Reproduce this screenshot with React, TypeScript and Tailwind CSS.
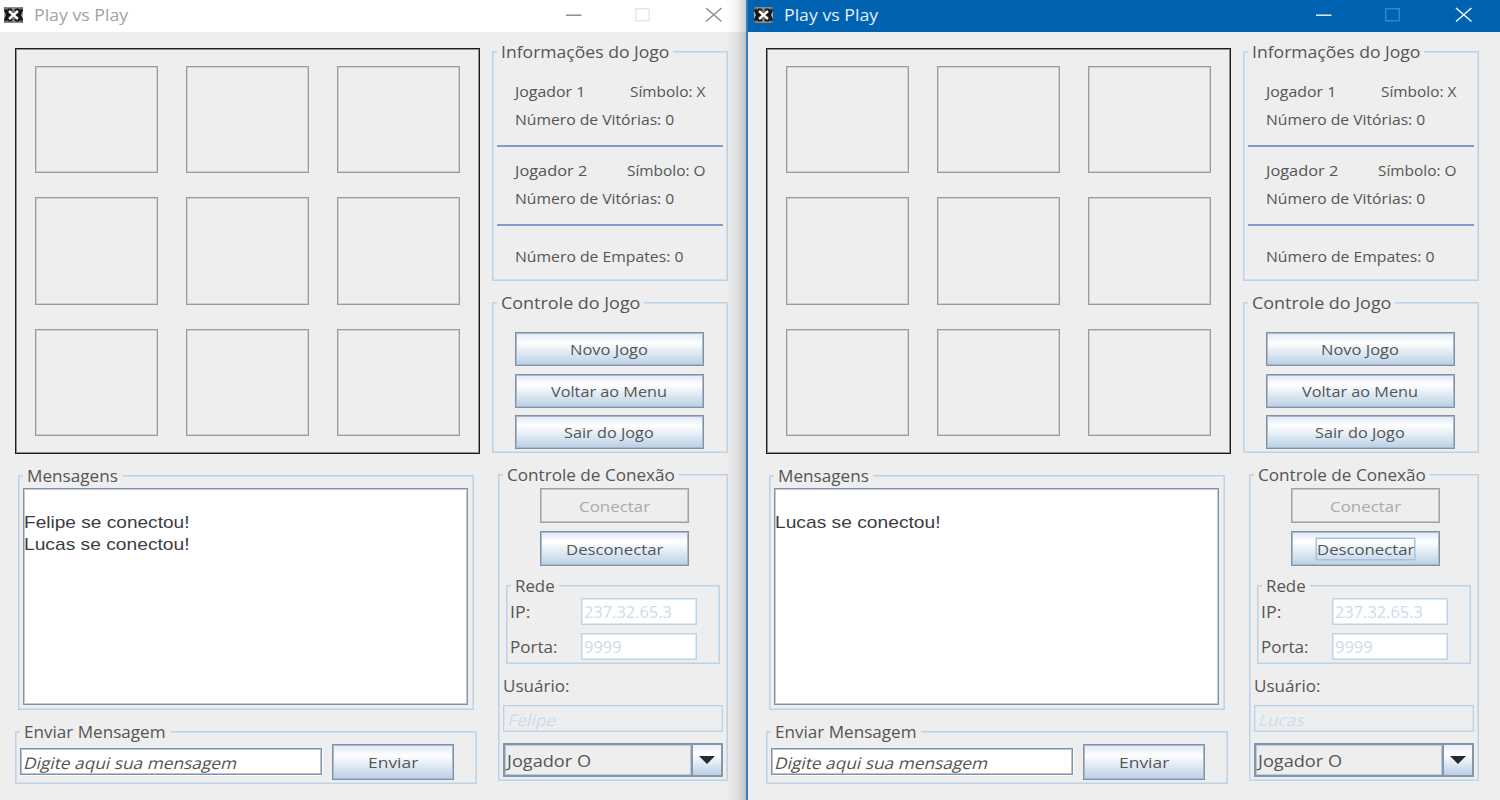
import { useLayoutEffect, useRef, useState, type ReactNode } from 'react';
import clsx from 'clsx';

/** Text stretched horizontally so that it fills exactly `width` pixels. */
function Text({ children, width, className, oblique }: { children: string; width: number; className?: string; oblique?: boolean }) {
  const ref = useRef<HTMLSpanElement>(null);
  const [scale, setScale] = useState(1);
  useLayoutEffect(() => {
    if (ref.current) setScale(width / ref.current.offsetWidth);
  }, [width, children]);
  return (
    <span
      className={clsx('block shrink-0 text-left leading-5 whitespace-nowrap', oblique && '-ml-[4px]', className)}
      style={{ width }}
    >
      <span
        ref={ref}
        className="inline-block origin-bottom-left"
        style={{ transform: `scaleX(${scale})${oblique ? ' skewX(-13deg)' : ''}` }}
      >
        {children}
      </span>
    </span>
  );
}

function Group({ title, titleWidth, className, children }: { title: string; titleWidth: number; className: string; children: ReactNode }) {
  return (
    <section className={clsx('relative shrink-0 border border-[#bdd3e8] shadow-[inset_0_0_0_1px_#d0dfed]', className)}>
      <div className="absolute -top-[10px] left-1 bg-[#eee] px-1">
        <Text width={titleWidth} className="text-[16px]">{title}</Text>
      </div>
      {children}
    </section>
  );
}

function Button({ label, width, className, disabled, focused }: { label: string; width: number; className: string; disabled?: boolean; focused?: boolean }) {
  return (
    <button
      className={clsx(
        'flex shrink-0 items-center justify-center border pr-px',
        disabled
          ? 'border-[#a2a2a2] text-[#aaa] shadow-[inset_0_0_0_1px_#c4c4c4]'
          : 'border-[#8093a6] bg-linear-to-b from-[#dfe9f4] via-white via-30% to-[#b9d0e6] shadow-[inset_0_0_0_1px_#a9b9c9]',
        className,
      )}
    >
      <span className={clsx(focused && 'shadow-[0_0_0_1.500px_#a9c1da]')}>
        <Text width={width}>{label}</Text>
      </span>
    </button>
  );
}

function AppIcon() {
  return (
    <svg className="h-4 w-[19px] shrink-0" viewBox="0 0 19 16">
      <rect width="19" height="16" fill="#6d6d6d" />
      <rect y="2.5" width="19" height="11" fill="#161616" />
      <path d="M1 0 L9.5 5.5 L18 0 Z M1 16 L9.5 10.5 L18 16 Z" fill="#8c8c8c" />
      <path d="M4 1.6h3.2L9.5 4l2.3-2.4H15v2.2H4z M4 14.4h3.2L9.5 12l2.3 2.4H15v-2.2H4z" fill="#161616" />
      <path d="M5 4l9 8M14 4l-9 8" stroke="#fff" strokeWidth="2.5" />
      <path d="M0 3.5l2 4.5-2 4.5z M19 3.5L17 8l2 4.5z" fill="#aaa" />
    </svg>
  );
}

function TitleBar({ active }: { active?: boolean }) {
  return (
    <header
      className={clsx(
        'flex h-8 shrink-0 items-start pl-1',
        active ? 'bg-[#0063b1] text-[#e4eef7]' : 'bg-white text-[#a2a2a2]',
      )}
    >
      <div className="flex h-[29px] items-center">
        <AppIcon />
        <Text width={94} className="ml-[11px] text-[16px]">Play vs Play</Text>
      </div>
      <svg className="ml-[434px] h-[29px] w-[170px]" viewBox="0 0 170 29" fill="none">
        <path d="M4 15.2h15.5" stroke={active ? '#e5eff7' : '#8e8e8e'} strokeWidth="1.5" />
        <rect x="73.7" y="8.7" width="13.6" height="12" stroke={active ? '#3f85c1' : '#e7e7e7'} strokeWidth="1.4" />
        <path d="M144 8l15.5 13.5M159.500 8L144 21.500" stroke={active ? '#f0f6fb' : '#8e8e8e'} strokeWidth="1.5" />
      </svg>
    </header>
  );
}

function Board() {
  return (
    <div className="grid h-[406px] w-[465px] shrink-0 grid-cols-[123px_123px_123px] grid-rows-[107.500px_107.500px_107.500px] gap-x-[28px] gap-y-[24.200px] border border-[#1c1c1c] pt-[16.600px] pl-[19px] shadow-[inset_0_0_0_1px_#909090]">
      {Array.from({ length: 9 }, (_, i) => (
        <div key={i} className="border border-[#9b9b9b] shadow-[inset_0_0_0_1px_#d0d0d0]" />
      ))}
    </div>
  );
}

function PlayerInfo({ name, nameWidth, symbol, symbolWidth }: { name: string; nameWidth: number; symbol: string; symbolWidth: number }) {
  return (
    <div className="mx-1 flex h-[79px] flex-col gap-2 border-b-2 border-[#8199cb] pt-[13px] pr-[18px] pl-[18px]">
      <div className="flex justify-between">
        <Text width={nameWidth}>{name}</Text>
        <Text width={symbolWidth}>{symbol}</Text>
      </div>
      <Text width={159}>Número de Vitórias: 0</Text>
    </div>
  );
}

function Field({ label, labelWidth, value, valueWidth }: { label: string; labelWidth: number; value: string; valueWidth: number }) {
  return (
    <div className="flex h-[27px] items-center">
      <div className="w-[71px]">
        <Text width={labelWidth} className="text-[16px]">{label}</Text>
      </div>
      <div className="flex h-[27px] w-[116px] items-center border border-[#bdd3e8] bg-white pt-px pl-[2px] text-[#cadcf0] shadow-[inset_0_0_0_1px_#dde8f3]">
        <Text width={valueWidth} className="text-[16px]">{value}</Text>
      </div>
    </div>
  );
}

interface Message {
  text: string;
  width: number;
}

function Messages({ items }: { items: Message[] }) {
  return (
    <Group title="Mensagens" titleWidth={91} className="mt-[21px] ml-[3px] h-[235px] w-[456px] pt-[12px] pl-[4px]">
      <div className="h-[217px] w-[445px] border border-[#8093a6] bg-white pt-[23px] font-['Liberation_Sans',sans-serif] text-[17px] text-[#3c3c44] shadow-[inset_0_0_0_1px_#c3ccd6]">
        {items.map((m) => (
          <Text key={m.text} width={m.width} className="h-[21.500px] leading-[22px]">{m.text}</Text>
        ))}
      </div>
    </Group>
  );
}

function SendMessage() {
  return (
    <Group title="Enviar Mensagem" titleWidth={142} className="mt-[21px] h-[53px] w-[462px]">
      <div className="flex pt-[12px] pl-[4px]">
        <div className="mt-[4px] flex h-[27px] w-[302px] items-center border border-[#8093a6] bg-white pt-[2px] pl-[5px] shadow-[inset_0_0_0_1px_#b9c5d0,1px_1px_0_white]">
          <Text width={213} oblique className="text-[16px]">Digite aqui sua mensagem</Text>
        </div>
        <Button label="Enviar" width={50} className="ml-[10px] h-[36px] w-[122px]" />
      </div>
    </Group>
  );
}

function Connection({ user, userWidth, focused }: { user: string; userWidth: number; focused?: boolean }) {
  return (
    <Group title="Controle de Conexão" titleWidth={168} className="mt-[21px] ml-[6px] h-[307px] w-[230px] pt-[13px]">
      <div className="flex flex-col gap-2 pl-[41px]">
        <Button label="Conectar" width={71} className="h-[35px] w-[149px]" disabled />
        <Button label="Desconectar" width={97} className="h-[35px] w-[149px]" focused={focused} />
      </div>
      <Group title="Rede" titleWidth={40} className="mt-[19px] ml-[7px] h-[79px] w-[214px]">
        <div className="flex flex-col gap-2 pt-[12px] pl-[3px]">
          <Field label="IP:" labelWidth={20} value="237.32.65.3" valueWidth={88} />
          <Field label="Porta:" labelWidth={48} value="9999" valueWidth={38} />
        </div>
      </Group>
      <div className="px-1 pt-[12px]">
        <Text width={66} className="text-[16px]">Usuário:</Text>
        <div className="mt-[9px] flex h-[27px] items-center border border-[#bdd3e8] pt-[2px] pl-[6px] text-[#cadcf0] shadow-[inset_0_0_0_1px_#d9e4ee]">
          <Text width={userWidth} oblique className="text-[16px]">{user}</Text>
        </div>
        <div className="mt-[11px] flex h-[34px] border-2 border-[#8496a8]">
          <div className="flex flex-1 items-center border border-[#b7cbe0] pt-px pl-[1px]">
            <Text width={84} className="text-[16px]">Jogador O</Text>
          </div>
          <div className="flex w-[30px] items-center justify-center border-l-2 border-[#8496a8] bg-linear-to-b from-[#e6eef7] via-white via-30% to-[#b9d0e6]">
            <svg className="h-2 w-4" viewBox="0 0 16 8">
              <path d="M0 0h16L8 8z" fill="#2a2a2a" />
            </svg>
          </div>
        </div>
      </div>
    </Group>
  );
}

function GameBody({ messages, user, userWidth, focused }: { messages: Message[]; user: string; userWidth: number; focused?: boolean }) {
  return (
    <main className="flex flex-1 pt-4 text-[15px] text-[#555]">
      <div className="flex w-[477px] shrink-0 flex-col">
        <Board />
        <Messages items={messages} />
        <SendMessage />
      </div>
      <div className="flex w-[236px] shrink-0 flex-col pt-[3px]">
        <Group title="Informações do Jogo" titleWidth={168} className="h-[230px] w-[236px] pt-[16px]">
          <PlayerInfo name="Jogador 1" nameWidth={70} symbol="Símbolo: X" symbolWidth={75} />
          <PlayerInfo name="Jogador 2" nameWidth={72} symbol="Símbolo: O" symbolWidth={78} />
          <Text width={168} className="mt-[20px] ml-[22px]">Número de Empates: 0</Text>
        </Group>
        <Group title="Controle do Jogo" titleWidth={139} className="mt-[21px] h-[151px] w-[236px] pt-[29px]">
          <div className="flex flex-col gap-[7.500px] pl-[22px]">
            <Button label="Novo Jogo" width={78} className="h-[34px] w-[189px]" />
            <Button label="Voltar ao Menu" width={116} className="h-[34px] w-[189px]" />
            <Button label="Sair do Jogo" width={90} className="h-[34px] w-[189px]" />
          </div>
        </Group>
        <Connection user={user} userWidth={userWidth} focused={focused} />
      </div>
    </main>
  );
}

export default function App() {
  return (
    <div className="flex h-[800px] w-[1500px] overflow-hidden bg-[#eee] font-['Open_Sans',sans-serif]">
      <div className="relative flex w-[746px] shrink-0 flex-col">
        <TitleBar />
        <div className="flex flex-1 pl-[15px]">
          <GameBody
            user="Felipe"
            userWidth={48}
            messages={[
              { text: 'Felipe se conectou!', width: 165 },
              { text: 'Lucas se conectou!', width: 165 },
            ]}
          />
        </div>
        <div className="absolute inset-y-0 right-0 w-[20px] bg-linear-to-r from-transparent via-black/5 to-black/18" />
      </div>
      <div className="flex w-[754px] shrink-0 flex-col border-l-2 border-[#2d7fc4]">
        <div className="flex flex-col bg-[#0063b1] pl-[2px]">
          <TitleBar active />
        </div>
        <div className="flex flex-1 pl-[18px]">
          <GameBody user="Lucas" userWidth={45} focused messages={[{ text: 'Lucas se conectou!', width: 165 }]} />
        </div>
      </div>
    </div>
  );
}
